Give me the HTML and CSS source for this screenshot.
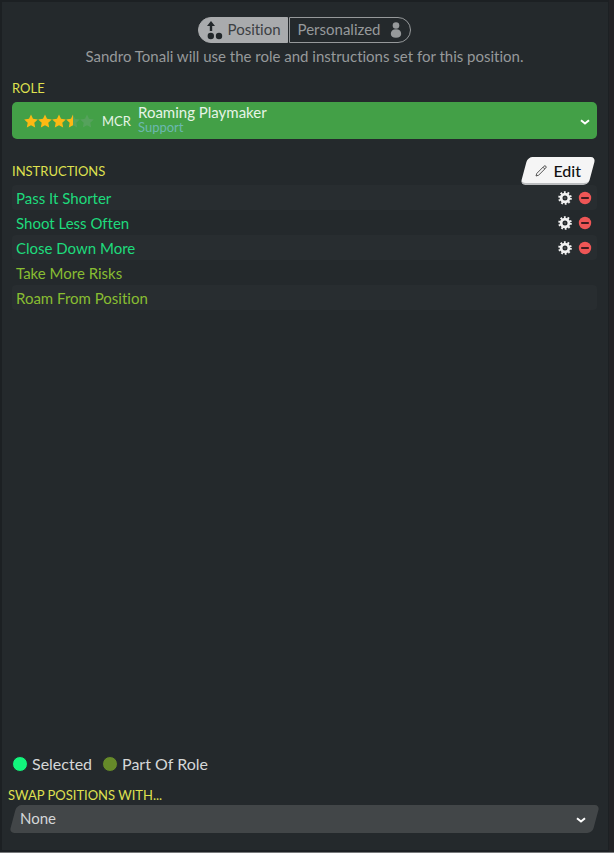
FILE: index.html
```
<!DOCTYPE html>
<html lang="en">
<head>
  <meta charset="UTF-8">
  <meta name="viewport" content="width=device-width, initial-scale=1">
  <title>Player Instructions</title>
  <link rel="stylesheet" href="styles.css">
</head>
<body>
  <!-- shared icons -->
  <svg class="sprite" aria-hidden="true">
    <symbol id="star" viewBox="0 0 14 14">
      <path d="M7 .4 9 4.800l4.800.600-3.500 3.300.9 4.800L7 11.200 2.800 13.500l.9-4.800L.2 5.400 5 4.800z"/>
    </symbol>
    <symbol id="chevron" viewBox="0 0 10 6">
      <path d="M1 1.200 5 4.500 9 1.200" fill="none" stroke="currentColor" stroke-width="2"/>
    </symbol>
    <symbol id="gear" viewBox="0 0 14 14">
      <circle cx="7" cy="7" r="5.800" fill="none" stroke="currentColor" stroke-width="2" stroke-dasharray="1.822 1.822"/>
      <circle cx="7" cy="7" r="3.900" fill="none" stroke="currentColor" stroke-width="2.800"/>
      <circle cx="7" cy="7" r=".8" fill="#777"/>
    </symbol>
    <symbol id="remove" viewBox="0 0 14 14">
      <circle cx="7" cy="7" r="6.200" fill="#ef5656"/>
      <path d="M3.200 7h7.600" stroke="#401c20" stroke-width="2"/>
    </symbol>
  </svg>

  <main class="panel">
    <div class="toggle">
      <button type="button" class="toggle-btn active" aria-pressed="true">
        <svg width="18" height="20" viewBox="0 0 18 20" fill="#22272a" aria-hidden="true">
          <path d="M5 1 9 6H6.200v5H3.800V6H1z"/>
          <circle cx="4.800" cy="16" r="3.200"/>
          <circle cx="13" cy="16" r="3.200"/>
        </svg>
        Position
      </button>
      <button type="button" class="toggle-btn" aria-pressed="false">
        Personalized
        <svg width="12" height="16" viewBox="0 0 12 16" fill="#96999b" aria-hidden="true">
          <circle cx="6" cy="3.500" r="3.300"/>
          <path d="M6 7.300c3.400 0 5.200 2 5.200 4.700 0 2.400-2 3.700-5.200 3.700S.8 14.400.8 12C.8 9.300 2.600 7.300 6 7.300z"/>
        </svg>
      </button>
    </div>
    <p class="hint">Sandro Tonali will use the role and instructions set for this position.</p>

    <label class="title" for="role">Role</label>
    <div class="role-box">
      <div class="stars" role="img" aria-label="3.5 out of 5 stars">
        <svg class="star"><use href="#star"/></svg>
        <svg class="star"><use href="#star"/></svg>
        <svg class="star"><use href="#star"/></svg>
        <span class="star-half">
          <svg class="star off"><use href="#star"/></svg>
          <span class="half"><svg class="star"><use href="#star"/></svg></span>
        </span>
        <svg class="star off"><use href="#star"/></svg>
      </div>
      <span class="pos">MCR</span>
      <div class="role-info">
        <select id="role" class="role-select">
          <option>Roaming Playmaker</option>
        </select>
        <span class="duty">Support</span>
      </div>
      <svg class="chevron" aria-hidden="true"><use href="#chevron"/></svg>
    </div>

    <div class="instructions-head">
      <h2 class="title">Instructions</h2>
      <button type="button" class="edit-btn">
        <svg width="12" height="12" viewBox="0 0 12 12" fill="none" stroke="#444" stroke-width=".9" aria-hidden="true">
          <path d="M1 11l.8-2.600L9 1.200a1.200 1.200 0 0 1 1.800 1.800L3.600 10.200z"/>
          <path d="M8 2.200l1.800 1.800"/>
        </svg>
        Edit
      </button>
    </div>
    <ul class="instructions">
      <li class="selected">
        <span class="name">Pass It Shorter</span>
        <button type="button" class="icon-btn" aria-label="Settings"><svg><use href="#gear"/></svg></button>
        <button type="button" class="icon-btn" aria-label="Remove"><svg><use href="#remove"/></svg></button>
      </li>
      <li class="selected">
        <span class="name">Shoot Less Often</span>
        <button type="button" class="icon-btn" aria-label="Settings"><svg><use href="#gear"/></svg></button>
        <button type="button" class="icon-btn" aria-label="Remove"><svg><use href="#remove"/></svg></button>
      </li>
      <li class="selected">
        <span class="name">Close Down More</span>
        <button type="button" class="icon-btn" aria-label="Settings"><svg><use href="#gear"/></svg></button>
        <button type="button" class="icon-btn" aria-label="Remove"><svg><use href="#remove"/></svg></button>
      </li>
      <li><span class="name">Take More Risks</span></li>
      <li><span class="name">Roam From Position</span></li>
    </ul>

    <div class="legend">
      <span class="legend-item"><i class="dot dot-selected"></i>Selected</span>
      <span class="legend-item"><i class="dot dot-role"></i>Part Of Role</span>
    </div>

    <div class="swap">
      <label class="title" for="swap">Swap positions with...</label>
      <div class="swap-box">
        <select id="swap" class="swap-select">
          <option>None</option>
        </select>
        <svg class="chevron" aria-hidden="true"><use href="#chevron"/></svg>
      </div>
    </div>
  </main>
</body>
</html>
```
FILE: styles.css
```
:root {
  --bg: #24292c;
  --edge: #1c2023;
  --outside: #222326;
  --row: #282d30;
  --green: #43a047;
  --selected: #1edb7c;
  --part: #88bd32;
  --title: #dfe04f;
  --text: #d5d7d8;
  --muted: #96999b;
}
* { box-sizing: border-box; margin: 0; padding: 0; }
body {
  font-family: "Century Gothic", Lato, sans-serif;
  font-size: 15px;
  line-height: 20px;
  font-variant-ligatures: none;
  color: var(--text);
  background: var(--outside);
  border-bottom: 1px solid #77797b;
  min-height: 100vh;
  display: flex;
  padding-right: 5px;
}
button, select {
  font: inherit;
  font-variant-ligatures: none;
  color: inherit;
  background: none;
  border: none;
  cursor: pointer;
}
select { appearance: none; outline: none; }
.sprite { position: absolute; width: 0; height: 0; }

.panel {
  flex: 1;
  display: flex;
  flex-direction: column;
  padding: 15px 11px 17px 10px;
  background: var(--bg);
  border: 2px solid var(--edge);
  border-right-width: 1px;
}
.title {
  font-size: 13px;
  font-weight: 400;
  line-height: 20px;
  text-transform: uppercase;
  color: var(--title);
}

/* position / personalized switch */
.toggle {
  align-self: center;
  display: flex;
  gap: 1px;
}
.toggle-btn {
  display: flex;
  align-items: center;
  gap: 10px;
  height: 26px;
  padding: 0 8px 2px;
  color: var(--muted);
  border: 1px solid var(--muted);
  border-radius: 0 13px 13px 0;
}
.toggle-btn.active {
  gap: 4px;
  padding: 0 6px 2px 7px;
  color: #3c4043;
  background: #a9abad;
  border-color: #a9abad;
  border-radius: 13px 0 0 13px;
}
.toggle-btn svg { margin-top: 2px; }
.hint {
  margin: 3px 0 12px;
  text-align: center;
  color: var(--muted);
}

/* role */
.role-box {
  position: relative;
  display: flex;
  align-items: center;
  height: 37px;
  margin-top: 4px;
  padding-left: 12px;
  background: var(--green);
  border-radius: 5px;
  color: #e6f4e6;
}
.stars { display: flex; width: 78px; }
.star { display: block; width: 14px; height: 14px; fill: #fdb913; }
.star.off { fill: #55a25c; }
.star-half { position: relative; }
.half {
  position: absolute;
  top: 0;
  left: 0;
  width: 7px;
  overflow: hidden;
}
.pos { width: 36px; font-size: 13px; }
.role-info {
  flex: 1;
  display: flex;
  flex-direction: column;
  padding-bottom: 4px;
}
.role-select {
  font-size: 15px;
  height: 18px;
  line-height: 18px;
  text-align: left;
}
.duty {
  font-size: 13px;
  line-height: 13px;
  color: #6cb8b0;
}
.chevron {
  position: absolute;
  right: 7px;
  top: 50%;
  width: 10px;
  height: 6px;
  margin-top: -2px;
  color: #fff;
  pointer-events: none;
}

/* instructions */
.instructions-head {
  display: flex;
  justify-content: space-between;
  align-items: center;
  margin-top: 18px;
}
.edit-btn {
  position: relative;
  z-index: 0;
  display: flex;
  align-items: center;
  gap: 6px;
  height: 28px;
  margin-right: 2px;
  padding: 0 14px;
  font-size: 16px;
  font-weight: 500;
  color: #111;
}
.edit-btn::before {
  content: '';
  position: absolute;
  inset: 0 3px;
  z-index: -1;
  background: #f5f5f5;
  border-bottom: 2px solid #bbbdbf;
  border-radius: 5px;
  transform: skewX(-15deg);
}
.instructions { list-style: none; }
.instructions li {
  display: flex;
  align-items: center;
  gap: 6px;
  height: 25px;
  padding: 0 5px 0 4px;
  color: var(--part);
  border-radius: 4px;
}
.instructions li:nth-child(odd) { background: var(--row); }
.instructions li.selected { color: var(--selected); }
.name { flex: 1; }
.icon-btn { width: 14px; height: 14px; color: #f2f2f2; }
.icon-btn svg { display: block; width: 14px; height: 14px; }

/* legend */
.legend {
  display: flex;
  gap: 10px;
  margin-top: auto;
  font-size: 16px;
}
.legend-item { display: flex; align-items: center; gap: 4px; }
.dot { width: 16px; height: 16px; border: 1px solid var(--bg); border-radius: 50%; }
.dot-selected { background: #12f57c; }
.dot-role { background: #668a29; }

/* swap */
.swap { margin: 11px -2px 0 -4px; }
.swap .title { display: block; }
.swap-box {
  position: relative;
  z-index: 0;
  margin-left: 2px;
}
.swap-box::before {
  content: '';
  position: absolute;
  inset: 0 3px;
  z-index: -1;
  background: #424648;
  border-radius: 5px;
  transform: skewX(-15deg);
}
.swap-select {
  display: block;
  width: 100%;
  height: 28px;
  padding: 0 10px 2px;
  font-size: 15px;
}
.swap-box .chevron { right: 13px; }
```
